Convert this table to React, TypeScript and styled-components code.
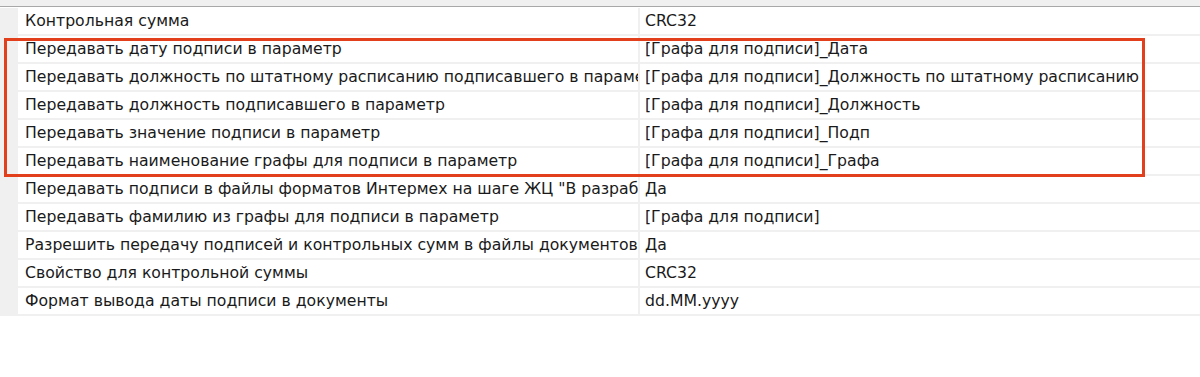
import React from 'react';
import styled, { createGlobalStyle } from 'styled-components';

const GlobalStyle = createGlobalStyle`
  html, body {
    margin: 0;
    padding: 0;
    background: #ffffff;
  }
  body {
    font-family: "DejaVu Sans", "Liberation Sans", sans-serif;
  }
`;

const Page = styled.div`
  width: 1200px;
  height: 377px;
  background: #ffffff;
  overflow: hidden;
`;

const TopBar = styled.div`
  height: 6px;
  background: #f0f0f0;
  border-bottom: 1px solid #a8a8a8;
  margin-bottom: 1px;
`;

const Table = styled.div`
  position: relative;
  display: flex;
  flex-direction: column;
`;

const Row = styled.div`
  display: grid;
  grid-template-columns: 18px 622px 1fr;
  height: 28px;
`;

const Gutter = styled.div`
  background: #f0f0f0;
`;

const Cell = styled.div<{ $value?: boolean }>`
  display: flex;
  align-items: center;
  padding: 0 0 2px ${(p) => (p.$value ? '5px' : '7px')};
  border-bottom: 2px solid #f0f0f0;
  border-right: ${(p) => (p.$value ? 'none' : '2px solid #f0f0f0')};
  font-size: 15.7px;
  color: #1a1a1a;
  white-space: nowrap;
  overflow: hidden;
  box-sizing: border-box;
`;

const Highlight = styled.div`
  position: absolute;
  left: 4px;
  top: 30px;
  width: 1141px;
  height: 139px;
  border: 3px solid #e2401c;
  box-sizing: border-box;
  pointer-events: none;
`;

const rows: [string, string][] = [
  ['Контрольная сумма', 'CRC32'],
  ['Передавать дату подписи в параметр', '[Графа для подписи]_Дата'],
  [
    'Передавать должность по штатному расписанию подписавшего в параметр',
    '[Графа для подписи]_Должность по штатному расписанию',
  ],
  ['Передавать должность подписавшего в параметр', '[Графа для подписи]_Должность'],
  ['Передавать значение подписи в параметр', '[Графа для подписи]_Подп'],
  ['Передавать наименование графы для подписи в параметр', '[Графа для подписи]_Графа'],
  [
    'Передавать подписи в файлы форматов Интермех на шаге ЖЦ "В разработке"',
    'Да',
  ],
  ['Передавать фамилию из графы для подписи в параметр', '[Графа для подписи]'],
  ['Разрешить передачу подписей и контрольных сумм в файлы документов', 'Да'],
  ['Свойство для контрольной суммы', 'CRC32'],
  ['Формат вывода даты подписи в документы', 'dd.MM.yyyy'],
];

export default function App() {
  return (
    <Page>
      <GlobalStyle />
      <TopBar />
      <Table>
        {rows.map(([name, value], i) => (
          <Row key={i}>
            <Gutter />
            <Cell>{name}</Cell>
            <Cell $value>{value}</Cell>
          </Row>
        ))}
        <Highlight />
      </Table>
    </Page>
  );
}
